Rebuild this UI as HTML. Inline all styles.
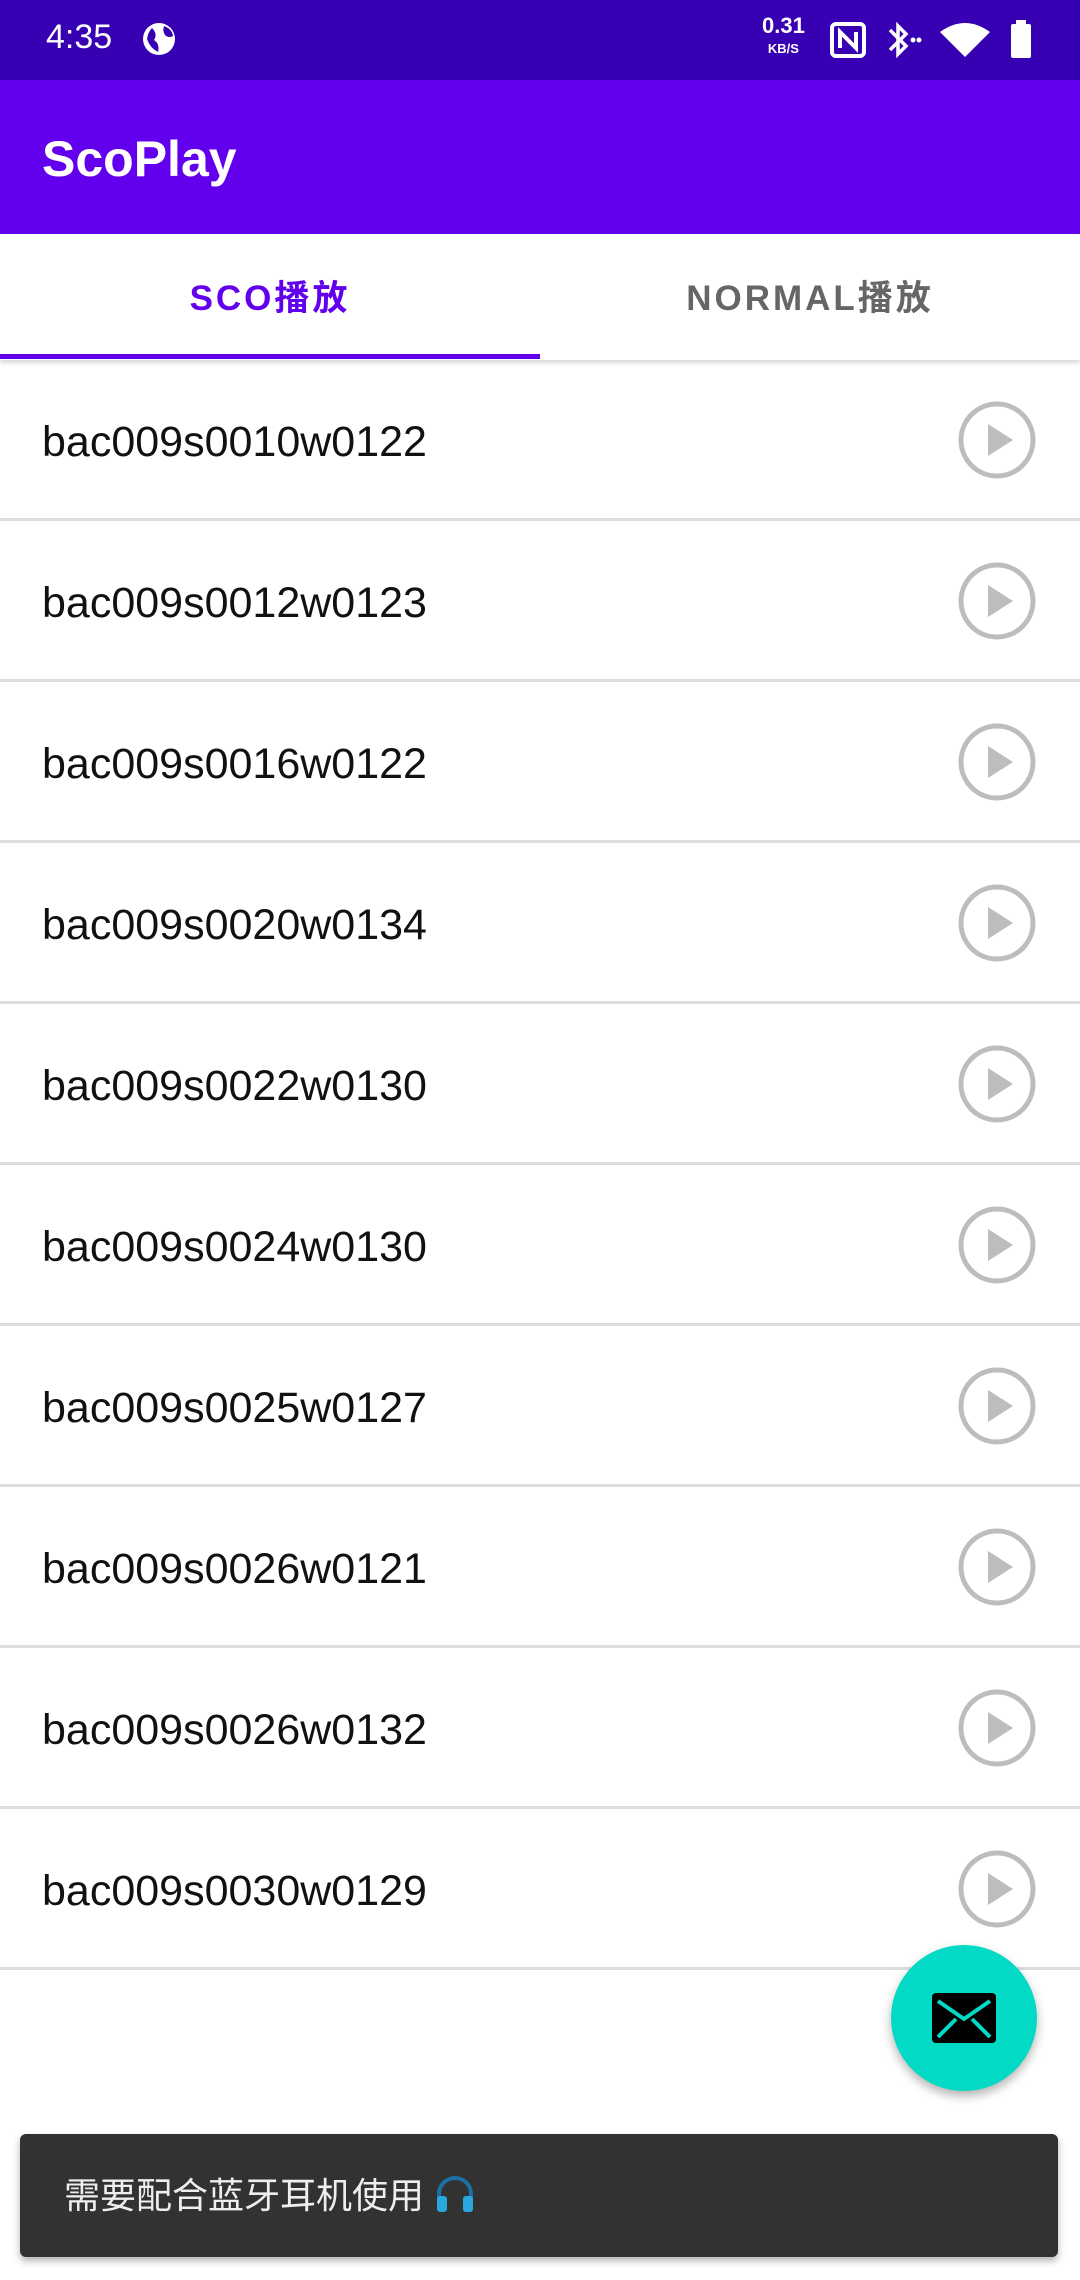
<!DOCTYPE html>
<html><head><meta charset="utf-8"><style>
*{margin:0;padding:0;box-sizing:border-box}
body{width:1080px;height:2280px;background:#fff;font-family:"Liberation Sans","Noto Sans CJK SC",sans-serif;position:relative;overflow:hidden}
.sb{position:absolute;top:0;left:0;width:1080px;height:80px;background:#3700b3;color:#fff}
.ab{position:absolute;top:80px;left:0;width:1080px;height:154px;background:#6200ee;color:#fff;font-size:50px;font-weight:bold;padding-left:42px;line-height:158px}
.tabs{position:absolute;top:234px;left:0;width:1080px;height:126px;background:#fff;box-shadow:0 3px 4px rgba(0,0,0,0.15)}
.tab{position:absolute;top:0;width:540px;height:126px;line-height:130px;text-align:center;font-size:35px;font-weight:bold;letter-spacing:3px}
.ind{position:absolute;left:0;top:354px;width:540px;height:5px;background:#6200ee}
.row{position:absolute;left:0;width:1080px;height:161px;border-bottom:3px solid #ddd}
.row span{position:absolute;left:42px;top:0;line-height:164px;font-size:43px;color:#111}
.row svg{position:absolute;left:957px;top:40px}
.fab{position:absolute;left:891px;top:1945px;width:146px;height:146px;border-radius:50%;background:#03dac5;box-shadow:0 5px 10px rgba(0,0,0,0.3)}
.snack{position:absolute;left:20px;top:2134px;width:1038px;height:123px;background:#323232;border-radius:6px;color:#eee;font-size:36px;line-height:123px;padding-left:44px;box-shadow:0 4px 8px rgba(0,0,0,0.3)}
</style></head><body>
<div class="sb">
<div style="position:absolute;left:46px;top:18px;font-size:34px">4:35</div>
<svg style="position:absolute;left:142px;top:22px" width="34" height="34" viewBox="0 0 34 34"><circle cx="17" cy="17" r="16" fill="#fff"/><path d="M10 6 Q16 12 12 18 Q18 22 16 30 Q8 26 5 17 Q6 10 10 6Z M22 4 Q20 10 24 14 Q28 16 31 14 Q30 7 22 4Z" fill="#3700b3"/></svg>
<div style="position:absolute;left:762px;top:16px;font-size:22px;font-weight:bold;line-height:20px;text-align:center">0.31<br><span style="font-size:13px">KB/S</span></div>
<svg style="position:absolute;left:830px;top:22px" width="36" height="36" viewBox="0 0 36 36"><rect x="2" y="2" width="32" height="32" rx="4" fill="none" stroke="#fff" stroke-width="4"/><path d="M10 26V10l16 16V10" fill="none" stroke="#fff" stroke-width="4"/></svg>
<svg style="position:absolute;left:886px;top:20px" width="36" height="40" viewBox="0 0 36 40"><path d="M4 10l16 16-8 8V6l8 8-16 16" fill="none" stroke="#fff" stroke-width="3.5"/><circle cx="27" cy="20" r="2.5" fill="#fff"/><circle cx="33" cy="20" r="2.5" fill="#fff"/></svg>
<svg style="position:absolute;left:940px;top:22px" width="50" height="36" viewBox="0 0 50 36"><path d="M25 35L0 10Q25-8 50 10Z" fill="#fff"/></svg>
<svg style="position:absolute;left:1010px;top:20px" width="22" height="38" viewBox="0 0 22 38"><rect x="6" y="0" width="10" height="4" fill="#fff"/><rect x="1" y="4" width="20" height="34" rx="2" fill="#fff"/></svg>
</div>
<div class="ab">ScoPlay</div>
<div class="tabs">
<div class="tab" style="left:0;color:#6200ee">SCO播放</div>
<div class="tab" style="left:540px;color:#666">NORMAL播放</div>
</div>
<div class="ind"></div>
<div class="row" style="top:360px"><span>bac009s0010w0122</span><svg width="80" height="80" viewBox="0 0 80 80"><circle cx="40" cy="40" r="36" fill="none" stroke="#bdbdbd" stroke-width="5"/><path d="M31 24L56 40L31 56Z" fill="#bdbdbd"/></svg></div>
<div class="row" style="top:521px"><span>bac009s0012w0123</span><svg width="80" height="80" viewBox="0 0 80 80"><circle cx="40" cy="40" r="36" fill="none" stroke="#bdbdbd" stroke-width="5"/><path d="M31 24L56 40L31 56Z" fill="#bdbdbd"/></svg></div>
<div class="row" style="top:682px"><span>bac009s0016w0122</span><svg width="80" height="80" viewBox="0 0 80 80"><circle cx="40" cy="40" r="36" fill="none" stroke="#bdbdbd" stroke-width="5"/><path d="M31 24L56 40L31 56Z" fill="#bdbdbd"/></svg></div>
<div class="row" style="top:843px"><span>bac009s0020w0134</span><svg width="80" height="80" viewBox="0 0 80 80"><circle cx="40" cy="40" r="36" fill="none" stroke="#bdbdbd" stroke-width="5"/><path d="M31 24L56 40L31 56Z" fill="#bdbdbd"/></svg></div>
<div class="row" style="top:1004px"><span>bac009s0022w0130</span><svg width="80" height="80" viewBox="0 0 80 80"><circle cx="40" cy="40" r="36" fill="none" stroke="#bdbdbd" stroke-width="5"/><path d="M31 24L56 40L31 56Z" fill="#bdbdbd"/></svg></div>
<div class="row" style="top:1165px"><span>bac009s0024w0130</span><svg width="80" height="80" viewBox="0 0 80 80"><circle cx="40" cy="40" r="36" fill="none" stroke="#bdbdbd" stroke-width="5"/><path d="M31 24L56 40L31 56Z" fill="#bdbdbd"/></svg></div>
<div class="row" style="top:1326px"><span>bac009s0025w0127</span><svg width="80" height="80" viewBox="0 0 80 80"><circle cx="40" cy="40" r="36" fill="none" stroke="#bdbdbd" stroke-width="5"/><path d="M31 24L56 40L31 56Z" fill="#bdbdbd"/></svg></div>
<div class="row" style="top:1487px"><span>bac009s0026w0121</span><svg width="80" height="80" viewBox="0 0 80 80"><circle cx="40" cy="40" r="36" fill="none" stroke="#bdbdbd" stroke-width="5"/><path d="M31 24L56 40L31 56Z" fill="#bdbdbd"/></svg></div>
<div class="row" style="top:1648px"><span>bac009s0026w0132</span><svg width="80" height="80" viewBox="0 0 80 80"><circle cx="40" cy="40" r="36" fill="none" stroke="#bdbdbd" stroke-width="5"/><path d="M31 24L56 40L31 56Z" fill="#bdbdbd"/></svg></div>
<div class="row" style="top:1809px"><span>bac009s0030w0129</span><svg width="80" height="80" viewBox="0 0 80 80"><circle cx="40" cy="40" r="36" fill="none" stroke="#bdbdbd" stroke-width="5"/><path d="M31 24L56 40L31 56Z" fill="#bdbdbd"/></svg></div>
<div class="fab"><svg style="position:absolute;left:41px;top:48px" width="64" height="50" viewBox="0 0 64 50"><rect x="0" y="0" width="64" height="50" rx="4" fill="#000"/><path d="M6 8L32 26L58 8M6 44L24 26M58 44L40 26" fill="none" stroke="#03dac5" stroke-width="4"/></svg></div>
<div class="snack">需要配合蓝牙耳机使用 <svg style="vertical-align:-6px" width="42" height="40" viewBox="0 0 42 40"><path d="M5 30V20a16 16 0 0 1 32 0v10" fill="none" stroke="#1e6fa8" stroke-width="4"/><rect x="3" y="22" width="10" height="16" rx="3" fill="#29a8e0"/><rect x="29" y="22" width="10" height="16" rx="3" fill="#29a8e0"/></svg></div>
</body></html>
